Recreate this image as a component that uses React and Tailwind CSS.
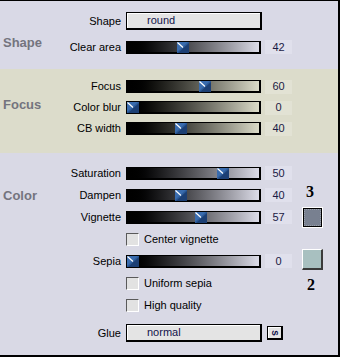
import React from "react";

const FONT = { fontFamily: '"Liberation Sans", Arial, sans-serif' };

function Thumb({ left }) {
  return (
    <svg
      width="12"
      height="11"
      viewBox="0 0 12 11"
      className="absolute top-0"
      style={{ left }}
    >
      <rect width="12" height="11" fill="#2c5a98" />
      <polygon points="12,1 12,11 1,11" fill="#1c3f74" />
      <polygon points="0,0 11,0 0,10" fill="#3a6cae" />
      <line x1="0.5" y1="0.5" x2="6" y2="5.5" stroke="#ffffff" strokeWidth="1.2" />
    </svg>
  );
}

function Slider({ value, min = 0, max = 100, olive }) {
  const frac = (value - min) / (max - min);
  return (
    <div
      className={
        "relative h-[13px] w-[135px] border-t border-l border-r-2 border-b-2 border-black bg-linear-to-r from-black " +
        (olive ? "to-[#dcdcc9]" : "to-[#dcdce8]")
      }
    >
      <Thumb left={Math.round(frac * 120)} />
    </div>
  );
}

function Value({ children, olive }) {
  return (
    <div
      className={
        "ml-[4px] flex h-[14px] w-[27px] items-center justify-center text-[11px] text-[#1a1a44] " +
        (olive ? "bg-[#e2e2d4]" : "bg-[#e0e0ec]")
      }
    >
      {children}
    </div>
  );
}

function Label({ children }) {
  return <div className="w-[61px] shrink-0 text-right text-[11px] leading-none text-black">{children}</div>;
}

function SliderRow({ label, value, min, max, olive, h }) {
  return (
    <div className={"flex items-center " + h}>
      <Label>{label}</Label>
      <div className="ml-[5px]">
        <Slider value={value} min={min} max={max} olive={olive} />
      </div>
      <Value olive={olive}>{value}</Value>
    </div>
  );
}

function Button({ text }) {
  return (
    <div className="flex h-[18px] w-[136px] items-center border-t border-l border-r-2 border-b-2 border-black bg-[#e4e4e4] pl-[20px] text-[11px] text-[#12124a] shadow-[inset_1px_1px_0_#ffffff]">
      {text}
    </div>
  );
}

function CheckRow({ label }) {
  return (
    <div className="flex h-[22px] items-center">
      <Label />
      <div className="ml-[5px] h-[13px] w-[13px] border-t border-l border-[#5a5a5a] border-r border-b border-r-white border-b-white bg-[#e2e2e2]" />
      <div className="ml-[5px] text-[11px] text-black">{label}</div>
    </div>
  );
}

function Title({ children, pt }) {
  return (
    <div className={"w-[60px] shrink-0 pl-[3px] " + pt}>
      <div className="text-[13px] font-bold leading-[15px] text-[#74747e]">{children}</div>
    </div>
  );
}

export default function App() {
  return (
    <div className="h-[357px] w-[340px] overflow-hidden border-t border-r-2 border-b-2 border-black" style={FONT}>
      {/* Shape */}
      <div className="flex h-[68px] bg-[#d9d9e6]">
        <Title pt="pt-[34px]">Shape</Title>
        <div className="pt-[7px]">
          <div className="flex h-[26px] items-center">
            <Label>Shape</Label>
            <div className="ml-[5px]">
              <Button text="round" />
            </div>
          </div>
          <SliderRow label="Clear area" value={42} h="h-[26px]" />
        </div>
      </div>

      {/* Focus */}
      <div className="flex h-[84px] bg-[#dcdccb]">
        <Title pt="pt-[28px]">Focus</Title>
        <div className="pt-[7px]">
          <SliderRow label="Focus" value={60} olive h="h-[21px]" />
          <SliderRow label="Color blur" value={0} olive h="h-[21px]" />
          <SliderRow label="CB width" value={40} olive h="h-[21px]" />
        </div>
      </div>

      {/* Color */}
      <div className="flex h-[202px] bg-[#d9d9e5]">
        <Title pt="pt-[35px]">Color</Title>
        <div className="pt-[9px]">
          <SliderRow label="Saturation" value={50} min={-100} max={100} h="h-[22px]" />
          <SliderRow label="Dampen" value={40} h="h-[22px]" />
          <SliderRow label="Vignette" value={57} h="h-[22px]" />
          <CheckRow label="Center vignette" />
          <SliderRow label="Sepia" value={0} h="h-[22px]" />
          <CheckRow label="Uniform sepia" />
          <CheckRow label="High quality" />
          <div className="mt-[6px] flex h-[22px] items-center">
            <Label>Glue</Label>
            <div className="ml-[5px]">
              <Button text="normal" />
            </div>
            <div className="ml-[5px] flex h-[14px] w-[16px] items-center justify-center border-t border-l border-r-2 border-b-2 border-black bg-[#e4e4e4] shadow-[inset_1px_1px_0_#ffffff]">
              <span className="rotate-90 text-[10px] font-bold leading-none text-[#12124a]">s</span>
            </div>
          </div>
        </div>
        <div className="flex flex-col pt-[30px]" style={{ fontFamily: '"Liberation Serif", "Times New Roman", serif' }}>
          <div className="pl-[14px] text-[16px] font-bold leading-[17px] text-black">3</div>
          <div className="mt-[7px] ml-[10px] h-[21px] w-[21px] border border-white bg-black p-[1px]">
            <div className="h-full w-full border border-dotted border-[#9aa0aa] bg-[#788090]" />
          </div>
          <div className="mt-[21px] ml-[10px] h-[21px] w-[21px] border-t border-l border-white border-r-2 border-b-2 border-r-[#3a3a3a] border-b-[#3a3a3a] bg-[#a8c0c0]" />
          <div className="mt-[6px] pl-[15px] text-[16px] font-bold leading-[17px] text-black">2</div>
        </div>
      </div>
    </div>
  );
}
